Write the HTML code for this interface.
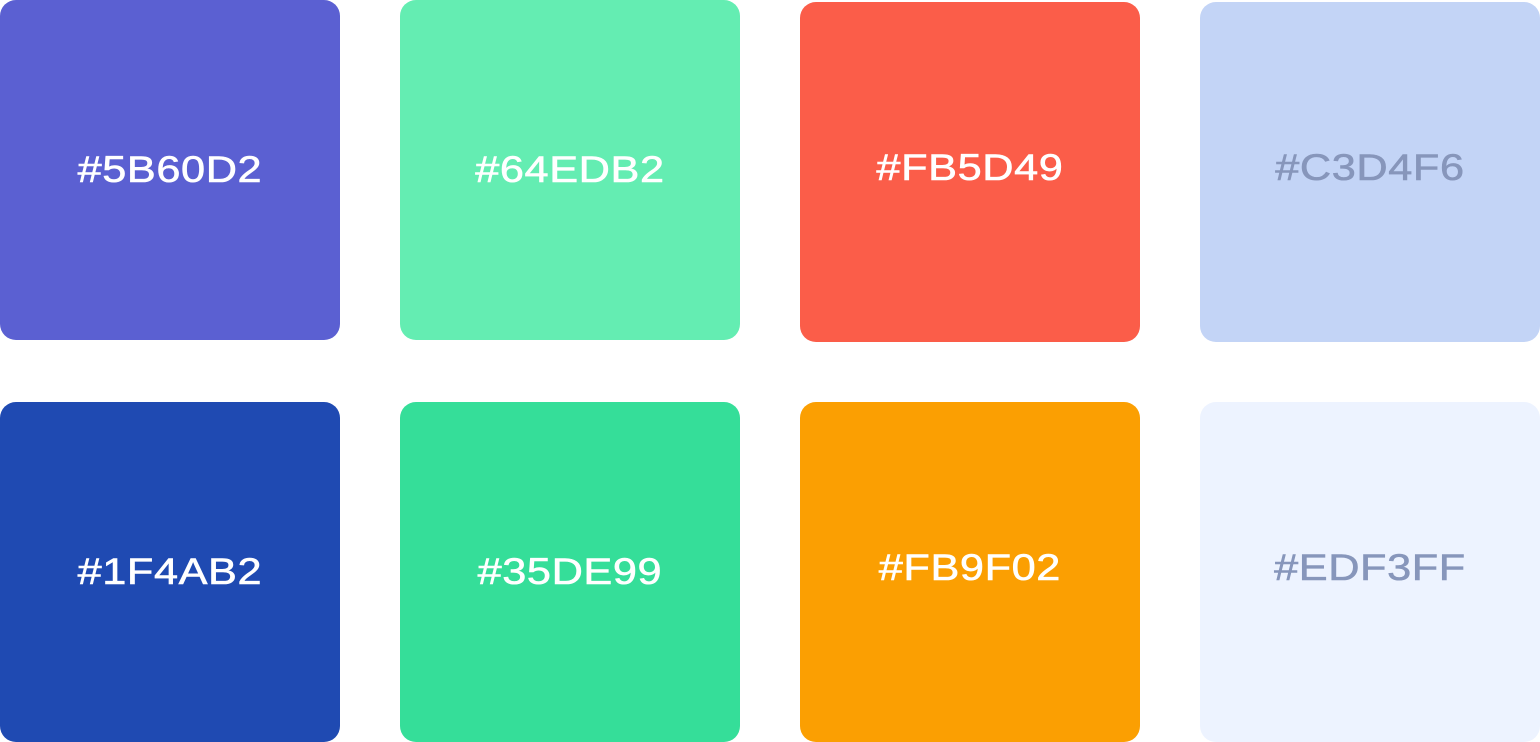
<!DOCTYPE html>
<html><head><meta charset="utf-8"><style>
html,body{margin:0;padding:0;background:#fff;width:1540px;height:742px;overflow:hidden;position:relative}
.b{position:absolute;width:340px;height:340px;border-radius:16px;display:flex;align-items:center;justify-content:center;font-family:"Liberation Sans",sans-serif;font-size:37px;color:#fff}
.b span{display:inline-block;transform:scaleX(1.17);letter-spacing:0.5px;-webkit-text-stroke:0.6px currentColor}
.d{color:#8796BB}
.u{padding-bottom:8px;box-sizing:border-box}
</style></head><body>
<div class="b" style="left:0;top:0;background:#5B60D2"><span>#5B60D2</span></div>
<div class="b" style="left:400px;top:0;background:#64EDB2"><span>#64EDB2</span></div>
<div class="b u" style="left:800px;top:2px;background:#FB5D49"><span>#FB5D49</span></div>
<div class="b d u" style="left:1200px;top:2px;background:#C3D4F6"><span>#C3D4F6</span></div>
<div class="b" style="left:0;top:402px;background:#1F4AB2"><span>#1F4AB2</span></div>
<div class="b" style="left:400px;top:402px;background:#35DE99"><span>#35DE99</span></div>
<div class="b u" style="left:800px;top:402px;background:#FB9F02"><span>#FB9F02</span></div>
<div class="b d u" style="left:1200px;top:402px;background:#EDF3FF"><span>#EDF3FF</span></div>
</body></html>
